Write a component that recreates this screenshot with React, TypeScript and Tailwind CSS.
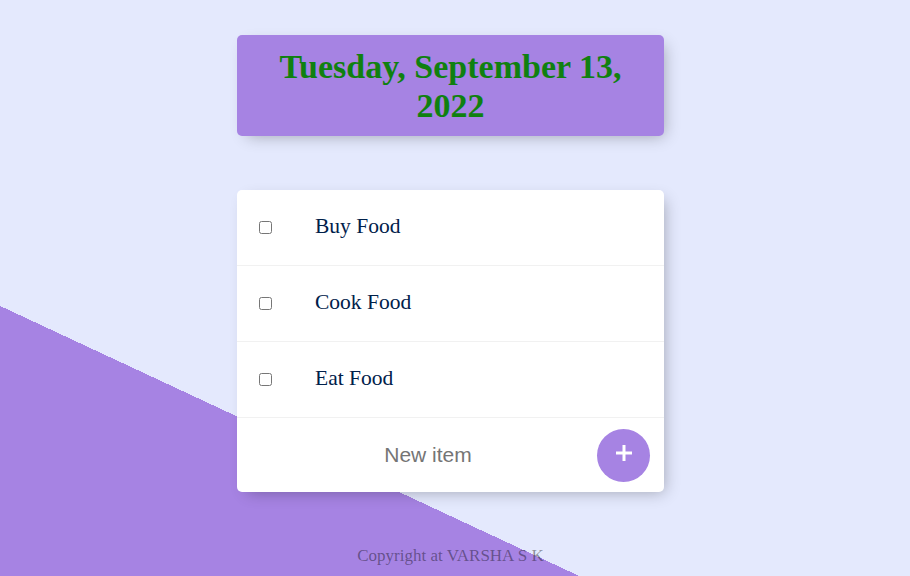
const items = ["Buy Food", "Cook Food", "Eat Food"];

export default function App() {
  return (
    <div className="min-h-screen bg-[#E4E9FD] bg-[linear-gradient(25deg,#A683E3_27%,#E4E9FD_27%)] pr-[9px] pt-[35px] font-['Liberation_Serif',serif]">
      <div className="mx-auto w-[427px]">
        <div className="rounded-[5px] bg-[#A683E3] px-[30px] pb-[11px] pt-[12px] text-center shadow-[5px_5px_15px_-5px_rgba(0,0,0,0.3)]">
          <h1 className="text-[34px] font-bold leading-[39px] text-[#108010]">
            Tuesday, September 13, 2022
          </h1>
        </div>

        <div className="mt-[54px] overflow-hidden rounded-[5px] bg-white shadow-[5px_5px_15px_-5px_rgba(0,0,0,0.3)]">
          {items.map((item) => (
            <div
              key={item}
              className="flex h-[76px] items-center border-b border-[#F1F1F1]"
            >
              <input
                type="checkbox"
                className="ml-[22px] h-[13px] w-[13px]"
              />
              <p className="ml-[43px] pb-[2px] text-[21.5px] text-[#00204A]">
                {item}
              </p>
            </div>
          ))}
          <form className="flex h-[74px] items-center">
            <input
              type="text"
              placeholder="New item"
              className="ml-[22px] h-[40px] min-w-0 flex-1 bg-transparent text-center font-['Liberation_Sans',sans-serif] text-[21px] text-gray-700 outline-none placeholder:text-[#757575]"
            />
            <button
              type="button"
              className="mr-[14px] flex h-[53px] w-[53px] items-center justify-center rounded-full bg-[#A683E3] pb-[4px]"
            >
              <svg width="18" height="18" viewBox="0 0 18 18">
                <path
                  d="M9 1v16M1 9h16"
                  stroke="white"
                  strokeWidth="3"
                  fill="none"
                />
              </svg>
            </button>
          </form>
        </div>

        <footer className="mt-[51px] text-center text-[17px] text-black/40">
          Copyright at VARSHA S K
        </footer>
      </div>
    </div>
  );
}
